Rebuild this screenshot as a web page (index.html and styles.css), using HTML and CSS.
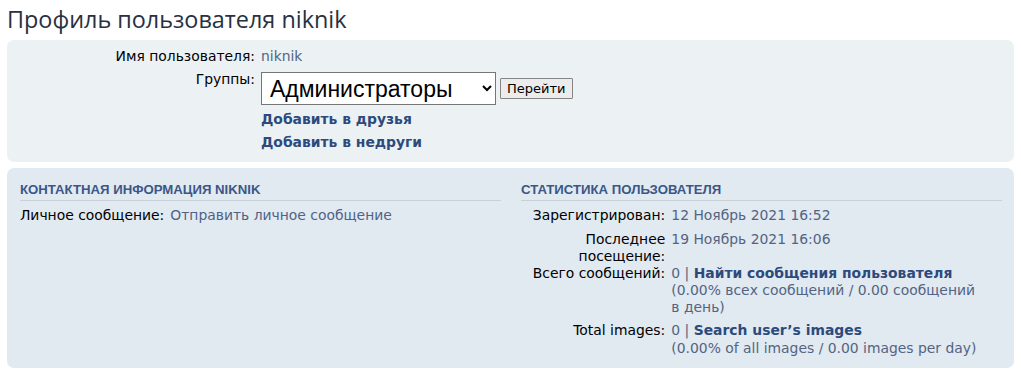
FILE: index.html
```html
<!DOCTYPE html>
<html lang="ru">
<head>
  <meta charset="UTF-8">
  <meta name="viewport" content="width=device-width, initial-scale=1.0">
  <title>Профиль пользователя niknik</title>
  <link rel="stylesheet" href="styles.css">
</head>
<body>
  <h2 class="username-title">Профиль пользователя niknik</h2>

  <div class="panel bg1">
    <dl class="details profile-details">
      <dt>Имя пользователя:</dt>
      <dd>niknik</dd>

      <dt>Группы:</dt>
      <dd class="group-row">
        <select name="g">
          <option>Администраторы</option>
        </select>
        <button type="button">Перейти</button>
      </dd>

      <dt></dt>
      <dd><a href="#" class="strong">Добавить в друзья</a></dd>

      <dt></dt>
      <dd><a href="#" class="strong">Добавить в недруги</a></dd>
    </dl>
  </div>

  <div class="panel bg2">
    <div class="columns">
      <div class="column">
        <h3>Контактная информация niknik</h3>
        <dl class="details">
          <dt class="nowrap">Личное сообщение:</dt>
          <dd><a href="#" class="plain">Отправить личное сообщение</a></dd>
        </dl>
      </div>

      <div class="column">
        <h3>Статистика пользователя</h3>
        <dl class="details">
          <dt>Зарегистрирован:</dt>
          <dd>12 Ноябрь 2021 16:52</dd>

          <dt>Последнее посещение:</dt>
          <dd>19 Ноябрь 2021 16:06</dd>

          <dt>Всего сообщений:</dt>
          <dd>0 | <a href="#" class="strong">Найти сообщения пользователя</a><br>(0.00% всех сообщений / 0.00 сообщений в день)</dd>

          <dt>Total images:</dt>
          <dd>0 | <a href="#" class="strong">Search user’s images</a><br>(0.00% of all images / 0.00 images per day)</dd>
        </dl>
      </div>
    </div>
  </div>
</body>
</html>
```

FILE: styles.css
```css
/* General */
body {
  margin: 0;
  padding: 0 7px;
  background: #fff;
  color: #000;
  font-family: "DejaVu Sans", Verdana, sans-serif;
  font-size: 13.9px;
  line-height: 17.16px;
}

a {
  color: #2d4a7c;
  text-decoration: none;
}

a.strong {
  font-weight: bold;
}

a.plain {
  color: #4f6385;
}

/* Title */
.username-title {
  margin: 4px 0 6px;
  font-family: "Open Sans", "Trebuchet MS", sans-serif;
  font-size: 23.4px;
  font-weight: normal;
  line-height: 30px;
  color: #28313f;
}

/* Panels */
.panel {
  border-radius: 7px;
  margin-bottom: 6px;
}

.bg1 {
  background: #ecf1f4;
  padding: 8px 12px 5px 13px;
}

.bg2 {
  background: #e1e9f1;
  padding: 6px 12px 5px 13px;
}

.columns {
  display: grid;
  grid-template-columns: 1fr 1fr;
  column-gap: 20px;
}

.column h3 {
  margin: 8px 0 6.5px;
  padding-bottom: 2.5px;
  border-bottom: 1px solid #c8d0d8;
  font-family: "Liberation Sans", Arial, sans-serif;
  font-size: 13.2px;
  font-weight: bold;
  line-height: 15px;
  text-transform: uppercase;
  color: #3b5788;
}

/* Details lists */
dl.details {
  display: grid;
  grid-template-columns: 30% 65%;
  margin: 0;
}

dl.details dt {
  text-align: right;
  color: #000;
}

dl.details dt.nowrap {
  white-space: nowrap;
  justify-self: end;
}

dl.details dd {
  margin: 0 0 6px;
  padding-left: 6px;
  color: #536482;
}

dl.profile-details {
  grid-template-columns: 235px 1fr;
}

/* Group selector */
.group-row {
  display: flex;
  align-items: center;
  gap: 4px;
}

.group-row select {
  width: 235px;
  height: 33px;
  margin-top: 1px;
  padding: 0 4px;
  font-family: "Liberation Sans", Arial, sans-serif;
  font-size: 23px;
  color: #000;
  background: #fff;
  border: 1px solid #767676;
  border-radius: 0;
}

.group-row button {
  height: 21px;
  padding: 0 6px;
  font-family: "DejaVu Sans", Verdana, sans-serif;
  font-size: 13px;
  color: #000;
  background: #ececec;
  border: 1px solid #858585;
  border-radius: 1px;
}
```
